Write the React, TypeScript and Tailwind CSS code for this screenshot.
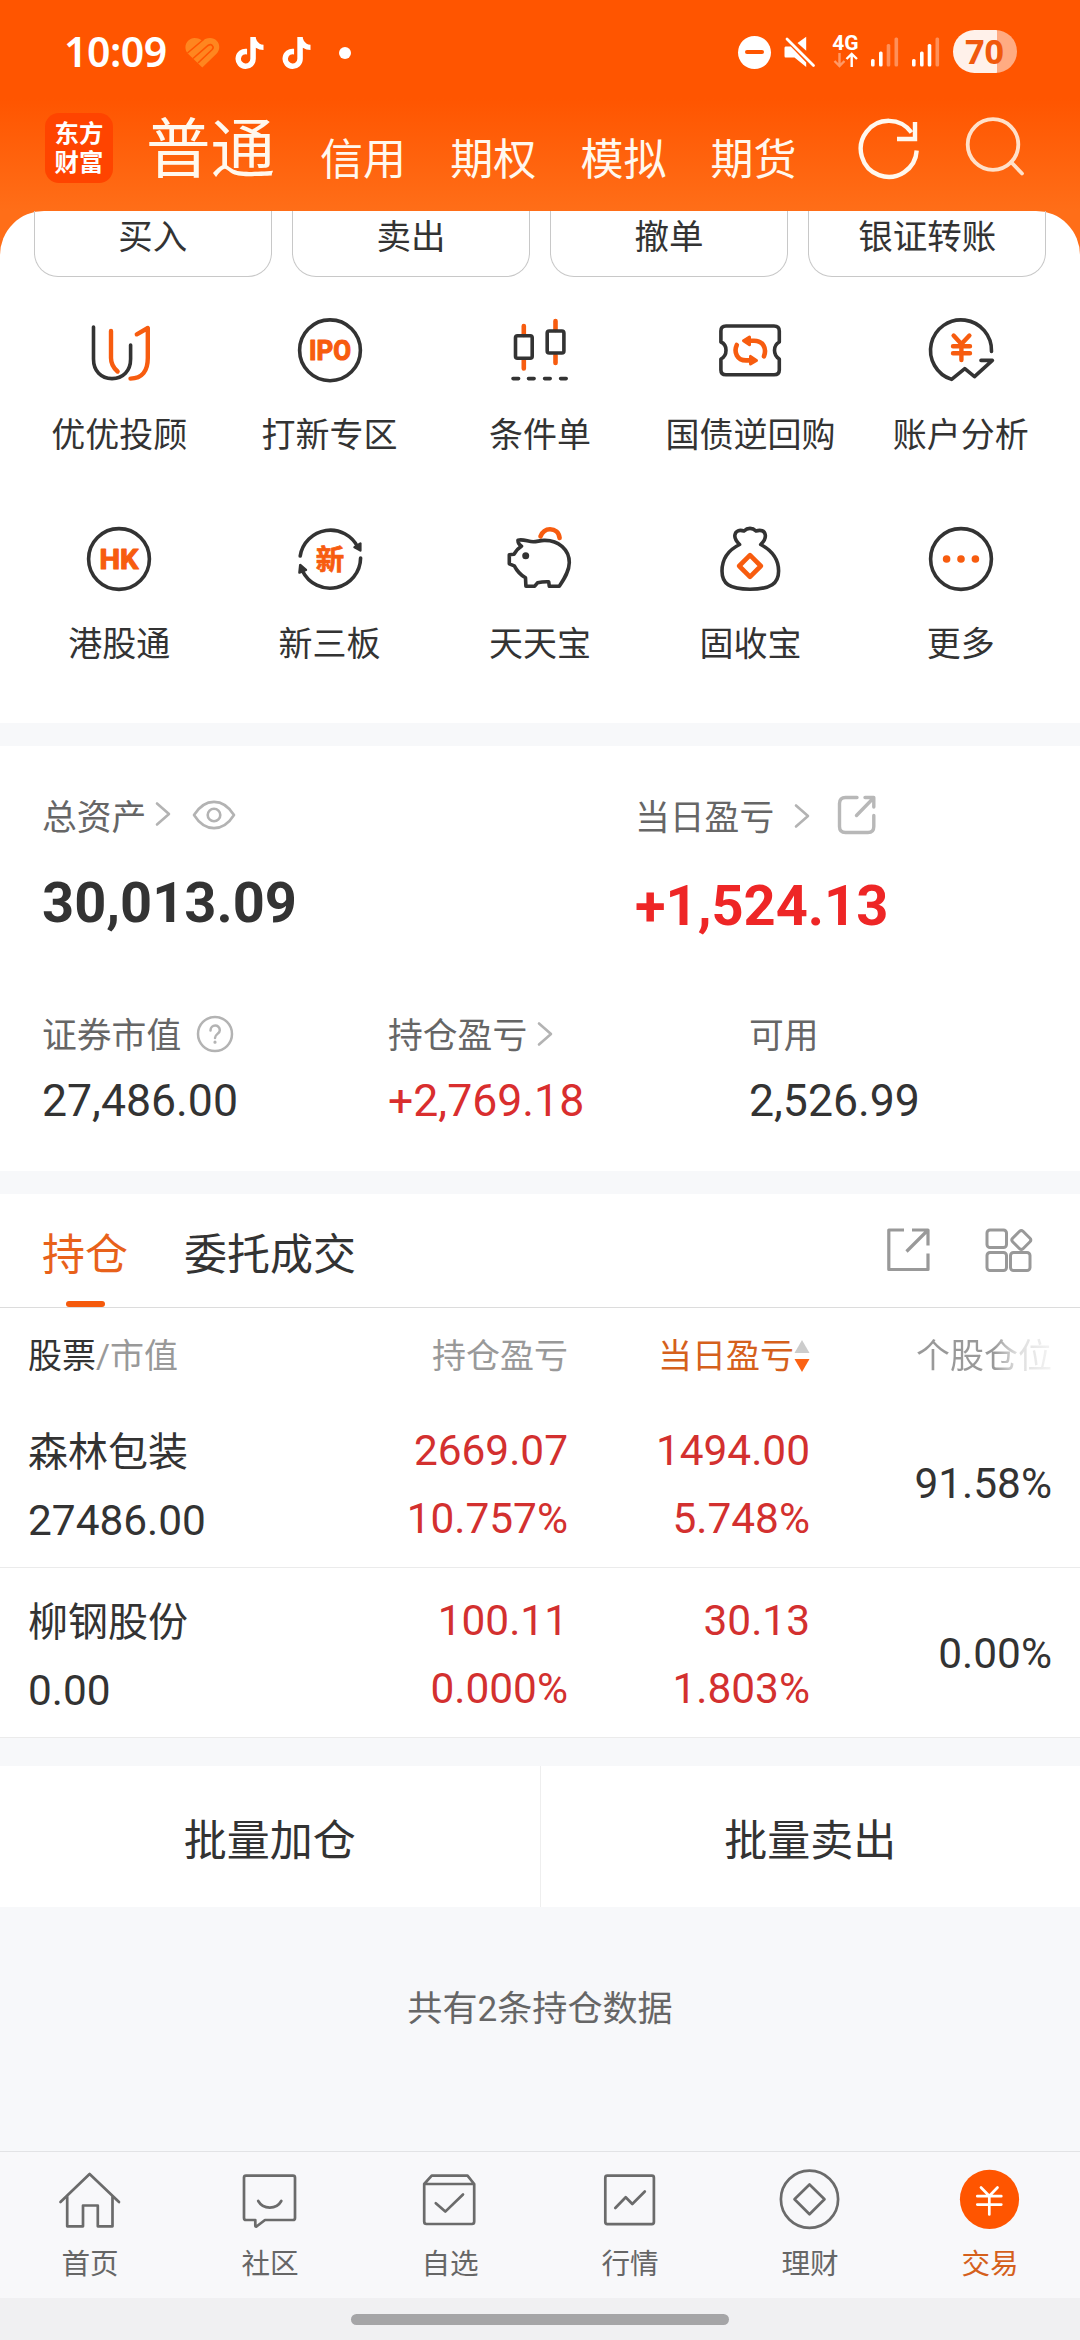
import type { ReactNode } from "react";
import { FaTiktok } from "react-icons/fa";

const DARK = "#333333";
const ORANGE = "#f75c0f";

const accountTabs = ["信用", "期权", "模拟", "期货"];
const actions = ["买入", "卖出", "撤单", "银证转账"];

const holdings = [
  { name: "森林包装", value: "27486.00", profit: "2669.07", profitRate: "10.757%", today: "1494.00", todayRate: "5.748%", ratio: "91.58%" },
  { name: "柳钢股份", value: "0.00", profit: "100.11", profitRate: "0.000%", today: "30.13", todayRate: "1.803%", ratio: "0.00%" },
];

// 72x72 canvas shared by the shortcut icons
function ShortcutSvg({ children }: { children: ReactNode }) {
  return (
    <svg width="72" height="72" viewBox="0 0 72 72" fill="none" stroke={DARK} strokeWidth="3.6" strokeLinecap="round" strokeLinejoin="round">
      {children}
    </svg>
  );
}

function IconLabel({ text, width }: { text: string; width: number }) {
  return (
    <text x={36 - width / 2} y="46" textLength={width} lengthAdjust="spacingAndGlyphs" fontFamily="Roboto, sans-serif" fontWeight="700" fontSize="28" fill={ORANGE} stroke={ORANGE} strokeWidth="1.2">
      {text}
    </text>
  );
}

const shortcuts: { label: string; icon: ReactNode }[] = [
  {
    label: "优优投顾",
    icon: (
      <ShortcutSvg>
        <path d="M10.5 13V45C10.5 57 18 64.6 29 64.6S47.6 57 47.6 45V31" />
        <path d="M28 17V44C28 50 30.5 54 34.6 57.5" stroke={ORANGE} strokeWidth="4.4" />
        <path d="M53.8 20.3L64.8 14V44C64.8 57 59 64.6 47.5 64.6" stroke={ORANGE} strokeWidth="4.4" />
      </ShortcutSvg>
    ),
  },
  {
    label: "打新专区",
    icon: (
      <ShortcutSvg>
        <circle cx="36" cy="36.3" r="30.4" />
        <IconLabel text="IPO" width={42} />
      </ShortcutSvg>
    ),
  },
  {
    label: "条件单",
    icon: (
      <ShortcutSvg>
        <path d="M19.8 12V21M19.8 46V54.5M51.5 7V16M51.5 41V49" stroke={ORANGE} strokeWidth="4.6" />
        <rect x="11.5" y="21.7" width="16.7" height="22.6" rx="2" />
        <rect x="43.2" y="17" width="16.7" height="22" rx="2" />
        <path d="M9 64.6H14.6M24.5 64.6H30.1M40.6 64.6H46.2M56.6 64.6H62.2" />
      </ShortcutSvg>
    ),
  },
  {
    label: "国债逆回购",
    icon: (
      <ShortcutSvg>
        <path d="M12 12H60Q65.3 12 65.3 17V28Q60.5 30.5 60.5 36.3T65.3 45V56Q65.3 60.8 60 60.8H12Q6.9 60.8 6.9 56V45Q12 42.5 12 36.3T6.9 28V17Q6.9 12 12 12Z" />
        <g stroke={ORANGE} strokeWidth="4.6">
          <path d="M35 26.8H40C49 26.8 53 34 50 42.3" />
          <path d="M37 46.4H32C23 46.4 19.5 38 22.8 31" />
          <path d="M29.5 26.7L35.5 23V30.8ZM42.5 46.4L36.5 42.4V50Z" fill={ORANGE} strokeWidth="3" />
        </g>
      </ShortcutSvg>
    ),
  },
  {
    label: "账户分析",
    icon: (
      <ShortcutSvg>
        <path d="M66.5 37.5A30.5 30.5 0 1 0 26.6 65.4L39.8 54.7L49.5 62.6L67.4 46.4H56" />
        <path d="M28.6 21.5L36.4 30L44.4 21.5M36.4 30V46M28 32.3H45M28 39.2H45" stroke={ORANGE} strokeWidth="4.4" />
      </ShortcutSvg>
    ),
  },
  {
    label: "港股通",
    icon: (
      <ShortcutSvg>
        <circle cx="36" cy="36" r="30.4" />
        <IconLabel text="HK" width={39} />
      </ShortcutSvg>
    ),
  },
  {
    label: "新三板",
    icon: (
      <ShortcutSvg>
        <path d="M6.2 33A30.6 30.6 0 0 1 64 24.5" />
        <path d="M66.6 35A30.6 30.6 0 0 1 8.5 48" />
        <path d="M66.4 20.5V27.5L60.5 24.3ZM6.2 42L5.4 49.6L12 47Z" fill={DARK} strokeWidth="2.4" />
        <text x="36" y="46.5" textAnchor="middle" fontFamily="'Noto Sans CJK SC', sans-serif" fontWeight="700" fontSize="28.5" fill={ORANGE} stroke={ORANGE} strokeWidth="0.7">
          新
        </text>
      </ShortcutSvg>
    ),
  },
  {
    label: "天天宝",
    icon: (
      <ShortcutSvg>
        <path d="M36.5 13.4C38.5 8.5 42 6.3 46 6.3C51 6.3 55 9.5 55.6 15" stroke={ORANGE} strokeWidth="4.6" />
        <path d="M14 17.2C19 15.8 24 18.6 29.3 18.8C33 18.6 36 17.6 40 17.4C55 17 65.3 27 65.3 39.5C65.3 48 60.5 55.5 55.3 63.2H45.3L44.7 58.8C40.5 58.6 37 59 33.5 59.8L30.7 63.2H21.9L21.5 54.8C16 51.5 13 48 10.3 42.8L5.3 40.8V31.8L10 31.2C12 28 14 25.2 17.5 23.2C15 21.5 13.8 19.8 14 17.2Z" />
        <circle cx="21.7" cy="32.8" r="3.5" fill={DARK} stroke="none" />
      </ShortcutSvg>
    ),
  },
  {
    label: "固收宝",
    icon: (
      <ShortcutSvg>
        <path d="M25.6 21.5C22 18 20.3 15.5 20.9 12C21.6 7.8 25.5 6.5 30 8C33.5 4.5 38.5 4.5 42 8C46.5 6.5 50.6 7.5 51.3 12C51.8 15.5 50 18.5 46.7 21.5C58 27.5 64.6 36 64.6 48C64.6 60.5 57 66.2 36 66.2S8 60.5 8 48C8 36 14.5 27 25.6 21.5Z" />
        <path d="M36 32.2L46.8 43L36 53.8L25.2 43Z" stroke={ORANGE} strokeWidth="4.6" />
      </ShortcutSvg>
    ),
  },
  {
    label: "更多",
    icon: (
      <ShortcutSvg>
        <circle cx="36" cy="36" r="30.4" />
        <g fill={ORANGE} stroke="none">
          <circle cx="21.6" cy="36" r="3.8" />
          <circle cx="36" cy="36" r="3.8" />
          <circle cx="50.4" cy="36" r="3.8" />
        </g>
      </ShortcutSvg>
    ),
  },
];

function NavSvg({ children }: { children: ReactNode }) {
  return (
    <svg width="64" height="64" viewBox="0 0 64 64" fill="none" stroke="#6b6b6b" strokeWidth="2.7" strokeLinecap="round" strokeLinejoin="round">
      {children}
    </svg>
  );
}

const navItems: { label: string; icon: ReactNode; active?: boolean }[] = [
  {
    label: "首页",
    icon: (
      <NavSvg>
        <path d="M2.5 35L31.6 7L61 35M9.2 29.5V59.3H25V38.5H39.8V59.3H54.5V29.5" />
      </NavSvg>
    ),
  },
  {
    label: "社区",
    icon: (
      <NavSvg>
        <path d="M8 8.6H55Q57 8.6 57 10.6V51Q57 53 55 53H27L18.5 59.5Q17.3 60 17.3 58.5V53H8Q6 53 6 51V10.6Q6 8.6 8 8.6Z" />
        <path d="M20.2 34Q24 40.6 31.8 40.6T43.3 34" />
      </NavSvg>
    ),
  },
  {
    label: "自选",
    icon: (
      <NavSvg>
        <path d="M6.2 17L13.7 8.7H49.5L56.2 17V54.5Q56.2 57 54 57H8.5Q6.2 57 6.2 54.5ZM6.2 17H56.2M17.8 36.2L27.3 44.6L45 27.5" />
      </NavSvg>
    ),
  },
  {
    label: "行情",
    icon: (
      <NavSvg>
        <rect x="7.3" y="8.7" width="48.6" height="48.4" rx="2" />
        <path d="M17.3 41L27.7 30.3L34.3 37L46.8 24.5" />
      </NavSvg>
    ),
  },
  {
    label: "理财",
    icon: (
      <NavSvg>
        <circle cx="31.5" cy="32.3" r="28.6" />
        <path d="M31.5 17.5L46.5 32.3L31.5 47.3L16.5 32.3Z" />
      </NavSvg>
    ),
  },
  {
    label: "交易",
    active: true,
    icon: (
      <NavSvg>
        <circle cx="31.5" cy="32.3" r="29.6" fill="#ff5500" stroke="none" />
        <path d="M23 20.5L31.3 29L39.5 20.5M31.3 29V47.5M19.3 29.2H43.3M19.3 37.6H43.3" stroke="#fff" strokeWidth="2.7" />
      </NavSvg>
    ),
  },
];

function Chevron() {
  return (
    <svg width="16" height="26" viewBox="0 0 16 26" fill="none" stroke="#b3b3b3" strokeWidth="2.6" strokeLinecap="round" strokeLinejoin="round">
      <path d="M2 2.5L14 13L2 23.5" />
    </svg>
  );
}

function Signal({ level }: { level: number }) {
  const bars = [
    { x: 0, y: 22 },
    { x: 8, y: 14.5 },
    { x: 15.7, y: 7 },
    { x: 23.5, y: 0.5 },
  ];
  return (
    <svg width="28" height="30" viewBox="0 0 28 30">
      {bars.map((b, i) => (
        <rect key={i} x={b.x} y={b.y} width="3.6" height={29.5 - b.y} rx="1.5" fill="#fff" opacity={i < level ? 1 : 0.35} />
      ))}
    </svg>
  );
}

function StatusBar() {
  return (
    <div className="flex h-[102px] items-center pl-[64px] pr-[63px] text-white">
      <span className="w-[121px] font-['Noto_Sans'] text-[41px] font-semibold leading-none tracking-[-0.5px]">10:09</span>
      {/* heart cut by diagonal stripes */}
      <svg className="mt-[3px]" width="35" height="30" viewBox="0 0 35 30">
        <path d="M17.3 29.5L3 15.8C-3 9 2.5 0 9.5 0C13 0 15.5 1.2 17.3 3C19.5 1 22 0 25 0C33 0 37.5 9 31.5 15.8Z" fill="#ff861f" />
        <path d="M2.5 15L18.5 1.5M8 20.5L23 7.5Q26 5.5 27.5 8M13 25L27.2 11.5Q29 9.5 27.5 8" fill="none" stroke="#ff5500" strokeWidth="1.6" />
      </svg>
      <FaTiktok className="ml-[15px] mt-[3px] h-[32px] w-[29px]" />
      <FaTiktok className="ml-[18px] mt-[3px] h-[32px] w-[29px]" />
      <span className="ml-[28px] mt-[4px] h-[12px] w-[12px] rounded-full bg-white" />
      <div className="ml-auto flex items-center">
        <span className="mt-[2px] flex h-[33px] w-[33px] items-center justify-center rounded-full bg-white">
          <span className="h-[4px] w-[19px] rounded-full bg-[#ff5500]" />
        </span>
        <svg className="ml-[13px] mt-[2px]" width="32" height="32" viewBox="0 0 32 32" fill="#fff">
          <path d="M1.5 10.5H6.8L22.2 26.5V31L10.5 21.5H1.5Q0.5 21.5 0.5 20V12Q0.5 10.5 1.5 10.5Z" />
          <path d="M22.2 0.8V14.8L13.5 7Z" />
          <path d="M3 3L29.5 29.5" stroke="#fff" strokeWidth="2.8" strokeLinecap="round" />
        </svg>
        <div className="ml-[16px] flex w-[27px] flex-col items-center">
          <span className="font-['Roboto'] text-[21px] font-bold leading-[18px]">4G</span>
          <svg width="26" height="16" viewBox="0 0 26 16" fill="none" stroke="#fff" strokeWidth="2.4">
            <path d="M6.5 1V14M1.5 9L6.5 14L11.5 9" opacity="0.4" />
            <path d="M18.7 15V2M13.5 7L18.7 2L24 7" />
          </svg>
        </div>
        <div className="ml-[12px] mt-[2px]">
          <Signal level={2} />
        </div>
        <div className="ml-[13px] mt-[2px]">
          <Signal level={3} />
        </div>
        <div className="ml-[13px] flex h-[43px] w-[64px] items-center rounded-full bg-[linear-gradient(90deg,#fff1ea_0_44px,#ffab82_44px)] pl-[12px] font-['Noto_Sans'] text-[34px] font-bold leading-none text-[#f0590d]">
          70
        </div>
      </div>
    </div>
  );
}

function TitleBar() {
  return (
    <div className="flex h-[109px] pl-[45px] pr-[55px] text-[#fff8ee]">
      <div className="mt-[11px] flex h-[70px] w-[68px] flex-col items-center justify-center rounded-[14px] bg-[#ff4400] text-[24.4px] font-bold leading-[29px] text-white">
        <span>东方</span>
        <span>财富</span>
      </div>
      <span className="ml-[33px] mt-[16px] text-[64.5px] leading-[64px]">普通</span>
      <div className="ml-[45px] mt-[36px] flex gap-[44.2px] text-[43px] leading-[44px]">
        {accountTabs.map((tab) => (
          <span key={tab}>{tab}</span>
        ))}
      </div>
      <svg className="ml-auto mt-[16px]" width="62" height="62" viewBox="0 0 62 62" fill="none" stroke="currentColor" strokeWidth="4.4">
        <path d="M58.7 32.5A28 28 0 1 1 53.5 14.5" />
        <path d="M57 4V21H39" />
      </svg>
      <svg className="ml-[45px] mt-[15px]" width="60" height="60" viewBox="0 0 60 60" fill="none" stroke="#ffe0c9" strokeWidth="3.8" strokeLinecap="round">
        <circle cx="28" cy="27.5" r="25.3" />
        <path d="M46 45L57 56.5" />
      </svg>
    </div>
  );
}

function Holding({ item }: { item: (typeof holdings)[number] }) {
  return (
    <div className="flex h-[170px] border-b border-[#ebebeb] pl-[28px] pr-[28px] text-[42.4px] leading-[68px] text-[#333]">
      <div className="w-[240px] pt-[21px]">
        <p className="text-[40px]">{item.name}</p>
        <p>{item.value}</p>
      </div>
      <div className="w-[300px] pt-[19px] text-right text-[#d3302f]">
        <p>{item.profit}</p>
        <p>{item.profitRate}</p>
      </div>
      <div className="w-[242px] pt-[19px] text-right text-[#d3302f]">
        <p>{item.today}</p>
        <p>{item.todayRate}</p>
      </div>
      <div className="flex flex-1 items-center justify-end pt-[3px]">{item.ratio}</div>
    </div>
  );
}

export default function App() {
  return (
    <div className="flex h-[2340px] w-[1080px] flex-col overflow-hidden bg-[#f7f8fa] font-['Roboto','Noto_Sans_CJK_SC',sans-serif] text-[#333]">
      <header className="h-[211px] shrink-0 bg-[linear-gradient(180deg,#ff5500_0px,#ff5500_98px,#ff6e18_211px)]">
        <StatusBar />
        <TitleBar />
      </header>

      <div className="shrink-0 bg-[#ff6e18]">
        <section className="h-[512px] rounded-t-[44px] bg-white">
          <div className="flex gap-[20.5px] px-[34px]">
            {actions.map((action) => (
              <button key={action} className="flex h-[66px] flex-1 items-start justify-center rounded-b-[24px] border border-t-0 border-[#c8c8c8] text-[34.5px] leading-[53px]">
                {action}
              </button>
            ))}
          </div>
          <div className="grid grid-cols-5 px-[14px] pt-[37px]">
            {shortcuts.map((s) => (
              <div key={s.label} className="flex h-[209px] flex-col items-center whitespace-nowrap">
                {s.icon}
                <span className="mt-[27px] text-[34px] leading-[44px]">{s.label}</span>
              </div>
            ))}
          </div>
        </section>
      </div>

      {/* Assets */}
      <section className="mt-[23px] h-[425px] shrink-0 bg-white pl-[42px]">
        <div className="flex pt-[50px]">
          <div className="w-[593px]">
            <div className="flex h-[44px] items-center text-[34.8px] leading-[44px] text-[#666]">
              <span>总资产</span>
              <span className="-mt-[9px] ml-[9px]"><Chevron /></span>
              <svg className="-mt-[6px] ml-[21px]" width="44" height="32" viewBox="0 0 44 32" fill="none" stroke="#b3b3b3" strokeWidth="2.6">
                <path d="M2 16C13 -1.5 31 -1.5 42 16C31 33.5 13 33.5 2 16Z" strokeLinejoin="round" />
                <circle cx="22" cy="16" r="6.3" />
              </svg>
            </div>
            <p className="mt-[31px] text-[56px] font-bold leading-[64px]">30,013.09</p>
          </div>
          <div>
            <div className="flex h-[44px] items-center text-[34.8px] leading-[44px] text-[#666]">
              <span>当日盈亏</span>
              <span className="-mt-[5px] ml-[20px]"><Chevron /></span>
              <svg className="-mt-[6px] ml-[27px]" width="40" height="40" viewBox="0 0 40 40" fill="none" stroke="#b8b8b8" strokeWidth="3.4" strokeLinejoin="round" strokeLinecap="round">
                <path d="M20 2.5H8.5Q2.5 2.5 2.5 8.5V31.5Q2.5 37.5 8.5 37.5H31Q36.8 37.5 36.8 31.5V20.5" />
                <path d="M28 2.5H36.8V12M36 3.5L19.5 20.5" />
              </svg>
            </div>
            <p className="mt-[34px] text-[56px] font-bold leading-[64px] text-[#ee2626]">+1,524.13</p>
          </div>
        </div>
        <div className="flex pt-[76px]">
          <div className="w-[346px]">
            <div className="flex h-[44px] items-center text-[34.8px] leading-[44px] text-[#666]">
              <span>证券市值</span>
              <svg className="-mt-[5px] ml-[15px]" width="38" height="38" viewBox="0 0 38 38" fill="none" stroke="#b3b3b3" strokeWidth="2.5" strokeLinecap="round">
                <circle cx="19" cy="19" r="17" />
                <path d="M14.5 15.5C14.5 9 23.8 9 23.8 15.2C23.8 19 19 18.8 19 23" />
                <circle cx="19" cy="27.2" r="1" fill="#b3b3b3" strokeWidth="1.2" />
              </svg>
            </div>
            <p className="mt-[15px] text-[44.6px] leading-[56px]">27,486.00</p>
          </div>
          <div className="w-[361px]">
            <div className="flex h-[44px] items-center text-[34.8px] leading-[44px] text-[#666]">
              <span>持仓盈亏</span>
              <span className="-mt-[4px] ml-[10px]"><Chevron /></span>
            </div>
            <p className="mt-[15px] text-[44.6px] leading-[56px] text-[#d92e2e]">+2,769.18</p>
          </div>
          <div>
            <div className="flex h-[44px] items-center text-[34.8px] leading-[44px] text-[#666]">可用</div>
            <p className="mt-[15px] text-[44.6px] leading-[56px]">2,526.99</p>
          </div>
        </div>
      </section>

      {/* Holdings */}
      <section className="mt-[23px] h-[544px] shrink-0 bg-white">
        <div className="flex h-[114px] border-b border-[#dcdcdc] pl-[43px] pr-[47px] text-[43px]">
          <div className="flex w-[84px] flex-col items-center whitespace-nowrap text-[#e8611a]">
            <span className="mt-[33px] leading-[56px]">持仓</span>
            <span className="mt-auto h-[6px] w-[39px] rounded-full bg-[#f55a0c]" />
          </div>
          <span className="ml-[57px] mt-[33px] leading-[56px]">委托成交</span>
          <svg className="ml-auto mt-[33px]" width="46" height="46" viewBox="0 0 46 46" fill="none" stroke="#999" strokeWidth="3.2" strokeLinejoin="round">
            <path d="M18 3H2.8V42.5H42V26.5" />
            <path d="M26 3H42V18.5M41.5 3.5L20.5 24.5" />
          </svg>
          <svg className="ml-[53px] mt-[33px]" width="48" height="46" viewBox="0 0 48 46" fill="none" stroke="#999" strokeWidth="3" strokeLinejoin="round">
            <rect x="2" y="3" width="19.5" height="17.5" rx="3" />
            <rect x="2" y="25.5" width="19.5" height="18" rx="3" />
            <rect x="25.5" y="25.5" width="19.5" height="18" rx="3" />
            <path d="M38 4.3L45 11.3Q46.7 13 45 14.7L38 21.7Q36.3 23.3 34.6 21.7L27.6 14.7Q26 13 27.6 11.3L34.6 4.3Q36.3 2.7 38 4.3Z" />
          </svg>
        </div>
        <div className="flex h-[90px] items-center pl-[28px] pr-[28px] pt-[6px] text-[34px] leading-[44px] text-[#999]">
          <span className="w-[240px]">
            <span className="text-[#333]">股票</span>/市值
          </span>
          <span className="w-[300px] text-right">持仓盈亏</span>
          <span className="flex w-[242px] items-center justify-end text-[#d5601c]">
            当日盈亏
            <svg width="16" height="34" viewBox="0 0 16 34">
              <path d="M8 1L15.5 14H0.5Z" fill="#ccc" />
              <path d="M8 33L15.5 20H0.5Z" fill="#fb6213" />
            </svg>
          </span>
          <span className="flex-1 bg-[linear-gradient(90deg,#999_0,#999_184px,#dcdcdc_206px,#f4f4f4_242px)] bg-clip-text text-right text-transparent">个股仓位</span>
        </div>
        {holdings.map((item) => (
          <Holding key={item.name} item={item} />
        ))}
      </section>

      {/* Batch operations */}
      <div className="mt-[28px] flex h-[141px] shrink-0 bg-white text-[43px] leading-[141px]">
        <button className="flex-1 border-r border-[#eee] pt-[5px]">批量加仓</button>
        <button className="flex-1 pt-[5px]">批量卖出</button>
      </div>

      <p className="mt-[80px] text-center text-[35.1px] leading-[44px] text-[#666]">共有2条持仓数据</p>

      <nav className="mt-auto flex h-[147px] shrink-0 border-t border-[#e2e3e5] bg-[#f8f8fa]">
        {navItems.map((item) => (
          <div key={item.label} className={`flex flex-1 flex-col items-center pt-[15px] text-[28.6px] leading-[36px] ${item.active ? "text-[#d5601c]" : "text-[#666]"}`}>
            {item.icon}
            <span className="mt-[15px]">{item.label}</span>
          </div>
        ))}
      </nav>
      <div className="flex h-[42px] shrink-0 justify-center bg-[#f0f0f2] pt-[16px]">
        <span className="h-[11px] w-[378px] rounded-full bg-[#a5a5a7]" />
      </div>
    </div>
  );
}
